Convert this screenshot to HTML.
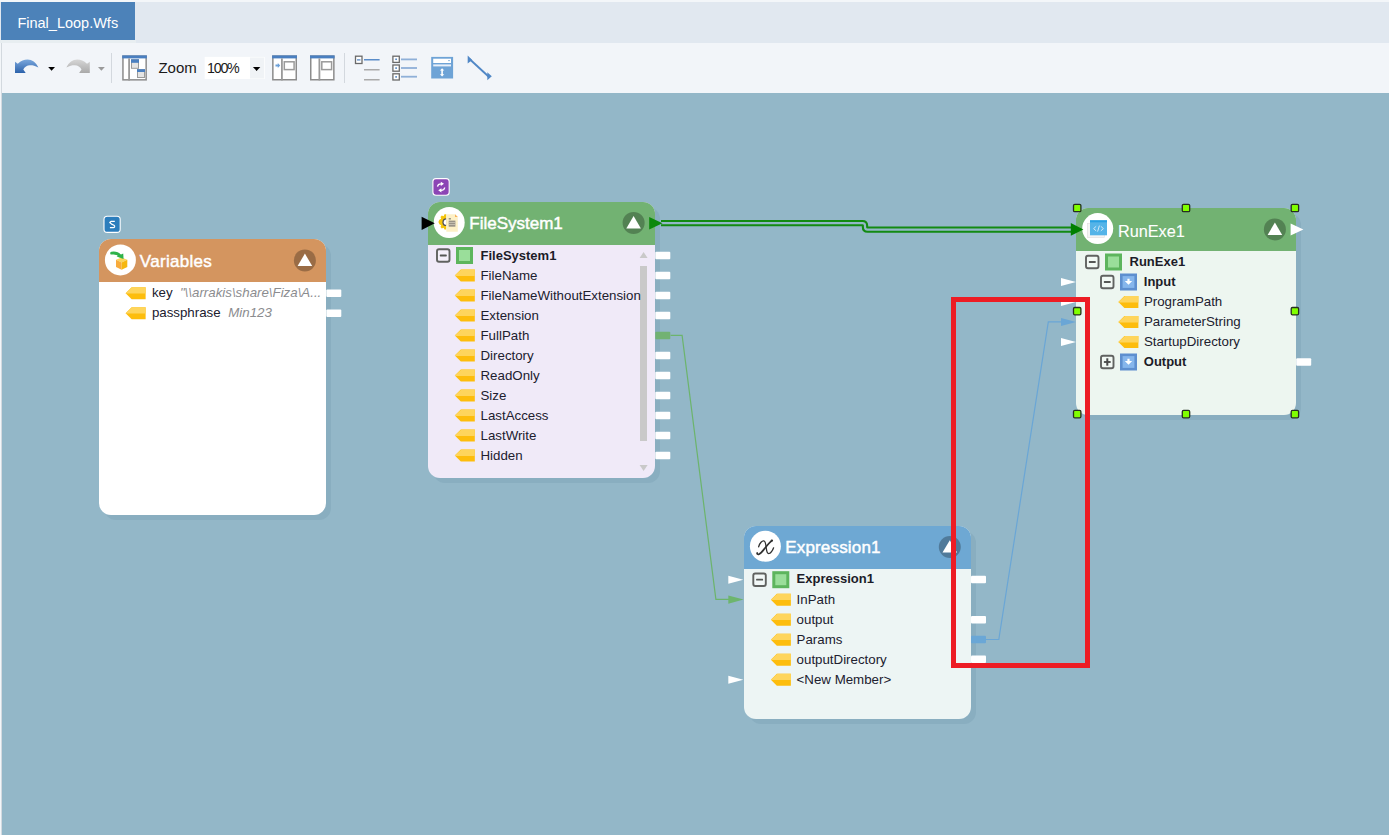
<!DOCTYPE html>
<html><head><meta charset="utf-8">
<style>
*{box-sizing:border-box;margin:0;padding:0}
html,body{width:1389px;height:835px;overflow:hidden;background:#f3f6f9;font-family:"Liberation Sans",sans-serif}
.abs{position:absolute}
#tabstrip{left:0;top:2px;width:1389px;height:41px;background:#e1e8f0}
#tab{left:1px;top:2px;width:134px;height:38px;background:#4c82b9}
#tabline{left:0;top:40px;width:136px;height:3px;background:#e8eef1}
#toolbar{left:1px;top:43px;width:1388px;height:50px;background:#f2f5f9;}
#canvas{left:2px;top:93px;width:1387px;height:742px;background:#93b7c8}
.t{position:absolute;white-space:nowrap;line-height:0}
.hdr{font-weight:normal;font-size:17px;color:#fff;-webkit-text-stroke:0.45px #fff}
.root{font-weight:bold;font-size:13px;color:#1c1c28}
.it{font-size:13.3px;color:#20202e}
.tab{font-size:14.5px;color:#fff}
.tb{font-size:15px;color:#1a1a1a}
.tb2{font-size:15px;color:#1a1a1a;letter-spacing:-1.3px;transform:scaleX(0.95);transform-origin:0 0}
.val{font-style:italic;color:#8b8c8f}
</style></head>
<body>
<div id="tabstrip" class="abs"></div>
<div id="tab" class="abs"></div>
<div id="tabline" class="abs"></div>
<div id="toolbar" class="abs"></div>
<div id="canvas" class="abs"></div>
<div class="abs" style="left:1px;top:43px;width:1px;height:792px;background:#d3d9df"></div>
<svg class="abs" style="left:0;top:0" width="1389" height="93" viewBox="0 0 1389 93"><defs><linearGradient id="ug" x1="0" y1="0" x2="0" y2="1"><stop offset="0" stop-color="#7aa7dc"/><stop offset="1" stop-color="#2c62ab"/></linearGradient><linearGradient id="rg" x1="0" y1="0" x2="0" y2="1"><stop offset="0" stop-color="#d6d6d6"/><stop offset="1" stop-color="#a9a9a9"/></linearGradient></defs><path d="M15,73 V61.7 L17.8,63.8 C21,61 24,59.6 27.6,59.6 C32,59.6 36,62.5 38.4,67.5 C35,65.8 32.5,65.2 30,65.3 C27,65.4 24.5,67 23.3,69.5 L25.7,73 Z" fill="url(#ug)"/><path d="M48.2,66.9 H55 L51.6,70.7 Z" fill="#000"/><g transform="translate(104.8,0) scale(-1,1)"><path d="M15,73 V61.7 L17.8,63.8 C21,61 24,59.6 27.6,59.6 C32,59.6 36,62.5 38.4,67.5 C35,65.8 32.5,65.2 30,65.3 C27,65.4 24.5,67 23.3,69.5 L25.7,73 Z" fill="url(#rg)"/></g><path d="M98,66.9 H104.8 L101.4,70.7 Z" fill="#9a9a9a"/><rect x="111" y="53" width="1" height="30" fill="#d3d8de"/><rect x="344" y="53" width="1" height="30" fill="#d3d8de"/><rect x="122.95" y="56.15" width="23.200000000000003" height="23.699999999999996" fill="#fff" stroke="#8c8c8c" stroke-width="1.5"/><rect x="122.2" y="55.4" width="24.700000000000003" height="3" fill="#4a7fc0"/><rect x="128.2" y="58.4" width="1.8" height="22.199999999999996" fill="#9a9a9a"/><rect x="131.5" y="59.8" width="7" height="8.5" fill="#e4e4e4" stroke="#9a9a9a" stroke-width="1"/><rect x="131" y="59.3" width="8" height="3.5" fill="#4a7fc0"/><rect x="137.5" y="69.7" width="7" height="7.8" fill="#e4e4e4" stroke="#9a9a9a" stroke-width="1"/><rect x="137" y="69.2" width="8" height="2.8" fill="#4a7fc0"/><rect x="204.7" y="56.9" width="60" height="22.1" fill="#fff"/><rect x="250" y="57.5" width="14" height="21" fill="#f0f3f6"/><path d="M252.9,66.9 H260.3 L256.6,70.9 Z" fill="#000"/><rect x="272.85" y="56.15" width="23.399999999999977" height="23.6" fill="#fff" stroke="#8c8c8c" stroke-width="1.5"/><rect x="272.1" y="55.4" width="24.899999999999977" height="3" fill="#4a7fc0"/><rect x="281" y="58.4" width="1.8" height="22.1" fill="#9a9a9a"/><rect x="284.3" y="61.8" width="9.8" height="7.8" fill="#fff" stroke="#9a9a9a" stroke-width="1.5"/><path d="M275.5,64.6 h2.3 v-1.5 l2.4,2.4 l-2.4,2.4 v-1.5 h-2.3 Z" fill="#6a9fd8"/><rect x="310.75" y="56.15" width="23.100000000000023" height="23.6" fill="#fff" stroke="#8c8c8c" stroke-width="1.5"/><rect x="310" y="55.4" width="24.600000000000023" height="3" fill="#4a7fc0"/><rect x="318.5" y="58.4" width="1.8" height="22.1" fill="#9a9a9a"/><rect x="321.8" y="61.8" width="9.8" height="7.8" fill="#fff" stroke="#9a9a9a" stroke-width="1.5"/><rect x="355.5" y="56.2" width="6.5" height="7.3" fill="#fff" stroke="#6a6a6a" stroke-width="1.3"/><rect x="357" y="59.3" width="3.5" height="1.2" fill="#4a7fc0"/><rect x="364" y="59" width="15.6" height="1.5" fill="#5a8cc8"/><rect x="364" y="69" width="15.6" height="1.5" fill="#aaaaaa"/><rect x="364" y="79" width="15.6" height="1.5" fill="#aaaaaa"/><rect x="392.9" y="56.2" width="6.4" height="6.2" fill="#fff" stroke="#6a6a6a" stroke-width="1.3"/><rect x="395.3" y="58.5" width="1.6" height="1.6" fill="#4a7fc0"/><rect x="392.9" y="65.0" width="6.4" height="6.2" fill="#fff" stroke="#6a6a6a" stroke-width="1.3"/><rect x="395.3" y="67.30000000000001" width="1.6" height="1.6" fill="#4a7fc0"/><rect x="392.9" y="73.8" width="6.4" height="6.2" fill="#fff" stroke="#6a6a6a" stroke-width="1.3"/><rect x="395.3" y="76.10000000000001" width="1.6" height="1.6" fill="#4a7fc0"/><rect x="401" y="58.5" width="16" height="1.8" fill="#8fb0d8"/><rect x="401" y="67.1" width="16" height="1.8" fill="#8fb0d8"/><rect x="401" y="75.8" width="16" height="1.8" fill="#8fb0d8"/><rect x="431.2" y="56.9" width="21.9" height="21.6" fill="#6ea3d6"/><rect x="433.2" y="58.7" width="17.8" height="4.3" fill="#fff"/><rect x="433.2" y="64.4" width="17.8" height="2" fill="#e8f0fa"/><path d="M448,60 h2 l-1,1.4 Z" fill="#6ea3d6"/><path d="M442.1,68.2 l-2.2,2.4 h1.4 v3.6 h-1.4 l2.2,2.4 l2.2,-2.4 h-1.4 v-3.6 h1.4 Z" fill="#fff"/><path d="M469.5,59 L488.5,76.5" stroke="#5087c6" stroke-width="1.9"/><path d="M467.7,55.6 L472.2,59.9 L467.7,63.6 Z" fill="#5087c6"/><path d="M487.3,72.2 L491.8,76.2 L487.3,80.3 Z" fill="#5087c6"/></svg>
<svg class="abs" style="left:0;top:0" width="1389" height="835" viewBox="0 0 1389 835"><rect x="104" y="244" width="227" height="276" rx="12" fill="#89aec0"/><clipPath id="c99"><rect x="99" y="239" width="227" height="276" rx="12"/></clipPath><g clip-path="url(#c99)"><rect x="99" y="239" width="227" height="276" fill="#ffffff"/><rect x="99" y="239" width="227" height="43" fill="#d4955f"/></g><circle cx="120.4" cy="259.9" r="15.5" fill="#fff"/><circle cx="304.9" cy="260.4" r="11" fill="#000" fill-opacity="0.27"/><path d="M297.59999999999997,265.9 L304.9,253.59999999999997 L312.2,265.9 Z" fill="#fff"/><g transform="translate(125.6,287.2)"><path d="M0,6 L6,0 H20 V12 H6 Z" fill="#fdbd0c"/><path d="M0,6 L6.6,0 H20 V6.4 H0.4 Z" fill="#fed55c"/></g><rect x="326.3" y="289.45" width="15" height="7.5" rx="1" fill="#fff"/><g transform="translate(125.6,307.2)"><path d="M0,6 L6,0 H20 V12 H6 Z" fill="#fdbd0c"/><path d="M0,6 L6.6,0 H20 V6.4 H0.4 Z" fill="#fed55c"/></g><rect x="326.3" y="309.45" width="15" height="7.5" rx="1" fill="#fff"/><rect x="104" y="216.2" width="16.2" height="16.2" rx="3.2" fill="#2b7dbc" stroke="#fff" stroke-width="1.1"/><path d="M114.8,221.4 H111 L109.8,222.5 L111.6,224.1 L114,225.2 Q114.8,225.8 114.6,226.7 Q114.3,227.6 113.2,227.7 H109.9" fill="none" stroke="#fff" stroke-width="1.25" stroke-linejoin="round"/><path d="M116,259.8 L121.6,257.4 L127.3,259.8 L121.6,262.4 Z" fill="#fad55c"/><path d="M116,259.8 L121.6,262.4 L121.6,269.7 L116,267 Z" fill="#f8ab3c"/><path d="M121.6,262.4 L127.3,259.8 L127.3,267 L121.6,269.7 Z" fill="#f6b70e"/><path d="M111.6,253.2 C115,252.6 118,253.6 120,255.8" fill="none" stroke="#2fb24a" stroke-width="2.8" stroke-linecap="round"/><path d="M116.6,256.6 L123.6,259 L123.2,253.4 Z" fill="#2fb24a"/><rect x="433" y="207" width="227" height="276" rx="12" fill="#89aec0"/><clipPath id="c428"><rect x="428" y="202" width="227" height="276" rx="12"/></clipPath><g clip-path="url(#c428)"><rect x="428" y="202" width="227" height="276" fill="#f0eaf8"/><rect x="428" y="202" width="227" height="43" fill="#72b272"/></g><circle cx="449.2" cy="222.5" r="15.5" fill="#fff"/><rect x="432.9" y="178.6" width="16.3" height="16.6" rx="3" fill="#8c45b5" stroke="#fff" stroke-width="1.1"/><path d="M437.5,186.6 C437.7,184.7 439,183.8 441.2,183.8 M444.7,187.5 C444.5,189.4 443.2,190.3 441,190.3" fill="none" stroke="#fff" stroke-width="1.3"/><path d="M440.8,181.7 L444,183.8 L440.8,185.9 Z M441.4,188.2 L438.2,190.3 L441.4,192.4 Z" fill="#fff"/><path d="M446.3,214.3 L446.3,229.6 L444.5,229.6 L443.6,227.8 L441.8,228.4 L440.5,227 L441.2,225.2 L439.4,224.2 L438.4,222 L439.4,219.8 L441.2,218.8 L440.5,217 L441.8,215.6 L443.6,216.2 L444.5,214.3 Z" fill="#f4c40c"/><path d="M446.3,218.3 A3.9,3.9 0 0 0 446.3,226.1 Z" fill="#50505a"/><path d="M446.3,219.6 A2.6,2.6 0 0 0 446.3,224.8 Z" fill="#fff"/><path d="M446.3,214.3 H455 L457.8,217 V231.7 H446.3 Z" fill="#fdf0c6"/><path d="M455,214.3 L457.8,217 H455 Z" fill="#f7b25a"/><rect x="448.7" y="218.1" width="2.2" height="1.4" fill="#8a8a80"/><rect x="448.7" y="220.6" width="6.7" height="6.1" fill="#9a9488"/><rect x="448.7" y="222.3" width="6.7" height="0.7" fill="#d8d0c0"/><rect x="448.7" y="224.3" width="6.7" height="0.7" fill="#d8d0c0"/><circle cx="633.6" cy="222.9" r="11" fill="#000" fill-opacity="0.27"/><path d="M626.3000000000001,228.4 L633.6,216.1 L640.9,228.4 Z" fill="#fff"/><rect x="437" y="249.25" width="12.5" height="12.5" rx="2" fill="#fff" fill-opacity="0.3" stroke="#606260" stroke-width="1.9"/><rect x="439.8" y="254.6" width="7" height="1.8" rx="0.6" fill="#555755"/><rect x="457.5" y="248.5" width="14" height="14" fill="#9ade9a" stroke="#5db55d" stroke-width="3"/><rect x="655.3" y="251.75" width="15" height="7.5" rx="1" fill="#fff"/><g transform="translate(454.8,269.5)"><path d="M0,6 L6,0 H20 V12 H6 Z" fill="#fdbd0c"/><path d="M0,6 L6.6,0 H20 V6.4 H0.4 Z" fill="#fed55c"/></g><rect x="655.3" y="271.75" width="15" height="7.5" rx="1" fill="#fff"/><g transform="translate(454.8,289.5)"><path d="M0,6 L6,0 H20 V12 H6 Z" fill="#fdbd0c"/><path d="M0,6 L6.6,0 H20 V6.4 H0.4 Z" fill="#fed55c"/></g><rect x="655.3" y="291.75" width="15" height="7.5" rx="1" fill="#fff"/><g transform="translate(454.8,309.5)"><path d="M0,6 L6,0 H20 V12 H6 Z" fill="#fdbd0c"/><path d="M0,6 L6.6,0 H20 V6.4 H0.4 Z" fill="#fed55c"/></g><rect x="655.3" y="311.75" width="15" height="7.5" rx="1" fill="#fff"/><g transform="translate(454.8,329.5)"><path d="M0,6 L6,0 H20 V12 H6 Z" fill="#fdbd0c"/><path d="M0,6 L6.6,0 H20 V6.4 H0.4 Z" fill="#fed55c"/></g><rect x="655.3" y="331.75" width="15" height="7.5" rx="1" fill="#72b272"/><g transform="translate(454.8,349.5)"><path d="M0,6 L6,0 H20 V12 H6 Z" fill="#fdbd0c"/><path d="M0,6 L6.6,0 H20 V6.4 H0.4 Z" fill="#fed55c"/></g><rect x="655.3" y="351.75" width="15" height="7.5" rx="1" fill="#fff"/><g transform="translate(454.8,369.5)"><path d="M0,6 L6,0 H20 V12 H6 Z" fill="#fdbd0c"/><path d="M0,6 L6.6,0 H20 V6.4 H0.4 Z" fill="#fed55c"/></g><rect x="655.3" y="371.75" width="15" height="7.5" rx="1" fill="#fff"/><g transform="translate(454.8,389.5)"><path d="M0,6 L6,0 H20 V12 H6 Z" fill="#fdbd0c"/><path d="M0,6 L6.6,0 H20 V6.4 H0.4 Z" fill="#fed55c"/></g><rect x="655.3" y="391.75" width="15" height="7.5" rx="1" fill="#fff"/><g transform="translate(454.8,409.5)"><path d="M0,6 L6,0 H20 V12 H6 Z" fill="#fdbd0c"/><path d="M0,6 L6.6,0 H20 V6.4 H0.4 Z" fill="#fed55c"/></g><rect x="655.3" y="411.75" width="15" height="7.5" rx="1" fill="#fff"/><g transform="translate(454.8,429.5)"><path d="M0,6 L6,0 H20 V12 H6 Z" fill="#fdbd0c"/><path d="M0,6 L6.6,0 H20 V6.4 H0.4 Z" fill="#fed55c"/></g><rect x="655.3" y="431.75" width="15" height="7.5" rx="1" fill="#fff"/><g transform="translate(454.8,449.5)"><path d="M0,6 L6,0 H20 V12 H6 Z" fill="#fdbd0c"/><path d="M0,6 L6.6,0 H20 V6.4 H0.4 Z" fill="#fed55c"/></g><rect x="655.3" y="451.75" width="15" height="7.5" rx="1" fill="#fff"/><path d="M639.6,258 L643.6,252 L647.6,258 Z" fill="#c9c9c9"/><rect x="640" y="266" width="7" height="175" fill="#c9c9c9"/><path d="M639.6,465 L643.6,471 L647.6,465 Z" fill="#c9c9c9"/><rect x="1081" y="213" width="220" height="207" rx="12" fill="#89aec0"/><clipPath id="c1076"><rect x="1076" y="208" width="220" height="207" rx="12"/></clipPath><g clip-path="url(#c1076)"><rect x="1076" y="208" width="220" height="207" fill="#edf6f0"/><rect x="1076" y="208" width="220" height="43" fill="#72b272"/></g><circle cx="1097.7" cy="228.6" r="15.5" fill="#fff"/><rect x="1087.3" y="223.4" width="17" height="14.2" fill="#f4f4f4" stroke="#e0dcdc" stroke-width="0.6"/><rect x="1090" y="220.3" width="17" height="15" fill="#55b4e8"/><rect x="1090" y="220.3" width="17" height="2" fill="#28a0e2"/><path d="M1096.2,226.3 L1093.6,228.6 L1096.2,230.9 M1100.8,226.3 L1103.4,228.6 L1100.8,230.9 M1099.4,225.6 L1097.6,231.6" fill="none" stroke="#cfe9f8" stroke-width="1"/><circle cx="1274.9" cy="229.4" r="11" fill="#000" fill-opacity="0.27"/><path d="M1267.6000000000001,234.9 L1274.9,222.6 L1282.2,234.9 Z" fill="#fff"/><rect x="1086" y="255.75" width="12.5" height="12.5" rx="2" fill="#fff" fill-opacity="0.3" stroke="#606260" stroke-width="1.9"/><rect x="1088.8" y="261.1" width="7" height="1.8" rx="0.6" fill="#555755"/><rect x="1106.5" y="255" width="14" height="14" fill="#9ade9a" stroke="#5db55d" stroke-width="3"/><rect x="1101" y="275.75" width="12.5" height="12.5" rx="2" fill="#fff" fill-opacity="0.3" stroke="#606260" stroke-width="1.9"/><rect x="1103.8" y="281.1" width="7" height="1.8" rx="0.6" fill="#555755"/><rect x="1121.3" y="274.8" width="14.4" height="14.4" fill="#86b6ec" stroke="#5e8fcf" stroke-width="2.6"/><path d="M1127.4,278.7 h2.2 v2.2 h2.6 l-3.7,3.8 l-3.7,-3.8 h2.6 Z" fill="#fff"/><g transform="translate(1118.4,296)"><path d="M0,6 L6,0 H20 V12 H6 Z" fill="#fdbd0c"/><path d="M0,6 L6.6,0 H20 V6.4 H0.4 Z" fill="#fed55c"/></g><g transform="translate(1118.4,316)"><path d="M0,6 L6,0 H20 V12 H6 Z" fill="#fdbd0c"/><path d="M0,6 L6.6,0 H20 V6.4 H0.4 Z" fill="#fed55c"/></g><g transform="translate(1118.4,336)"><path d="M0,6 L6,0 H20 V12 H6 Z" fill="#fdbd0c"/><path d="M0,6 L6.6,0 H20 V6.4 H0.4 Z" fill="#fed55c"/></g><rect x="1101" y="355.75" width="12.5" height="12.5" rx="2" fill="#fff" fill-opacity="0.3" stroke="#606260" stroke-width="1.9"/><rect x="1103.8" y="361.1" width="7" height="1.8" rx="0.6" fill="#555755"/><rect x="1106.3" y="358.3" width="2" height="7.4" fill="#4a4a4a"/><rect x="1121.3" y="354.8" width="14.4" height="14.4" fill="#86b6ec" stroke="#5e8fcf" stroke-width="2.6"/><path d="M1127.4,358.7 h2.2 v2.2 h2.6 l-3.7,3.8 l-3.7,-3.8 h2.6 Z" fill="#fff"/><rect x="1296.2" y="358.25" width="15" height="7.5" rx="1" fill="#fff"/><path d="M1061,278 L1076,282 L1061,286 Z" fill="#fff"/><path d="M1061,298 L1076,302 L1061,306 Z" fill="#fff"/><path d="M1061,318 L1076,322 L1061,326 Z" fill="#6aa6d6"/><path d="M1061,338 L1076,342 L1061,346 Z" fill="#fff"/><path d="M1290.6,223.4 L1303.4,229.4 L1290.6,235.4 Z" fill="#fff"/><rect x="749" y="531" width="227" height="193" rx="12" fill="#89aec0"/><clipPath id="c744"><rect x="744" y="526" width="227" height="193" rx="12"/></clipPath><g clip-path="url(#c744)"><rect x="744" y="526" width="227" height="193" fill="#edf5f4"/><rect x="744" y="526" width="227" height="43" fill="#6ea8d3"/></g><circle cx="765.4" cy="546.2" r="15.5" fill="#fff"/><path d="M772.2,540.6 C770.5,541.5 768,544.5 765.5,547.5 C763,550.5 761,553.5 759,554.2 C757.8,554.6 756.8,554 757.2,553" fill="none" stroke="#303030" stroke-width="1.7" stroke-linecap="round"/><circle cx="771.8" cy="540.6" r="1.1" fill="#303030"/><path d="M758.6,546.8 C759.5,543 762.3,540.2 764.2,541 C765.8,541.8 765.8,545 766.3,548.5 C766.8,552 767.5,554 769.2,553.5 C770.8,553 772.6,550.5 773.6,547.8" fill="none" stroke="#303030" stroke-width="1.3" stroke-linecap="round"/><circle cx="949.8" cy="547" r="11" fill="#000" fill-opacity="0.27"/><path d="M942.5,552.5 L949.8,540.2 L957.0999999999999,552.5 Z" fill="#fff"/><rect x="753.3" y="573.45" width="12.5" height="12.5" rx="2" fill="#fff" fill-opacity="0.3" stroke="#606260" stroke-width="1.9"/><rect x="756.0999999999999" y="578.8000000000001" width="7" height="1.8" rx="0.6" fill="#555755"/><rect x="773.8" y="572.7" width="14" height="14" fill="#9ade9a" stroke="#5db55d" stroke-width="3"/><rect x="971" y="575.75" width="15" height="7.5" rx="1" fill="#fff"/><g transform="translate(770.9,593.7)"><path d="M0,6 L6,0 H20 V12 H6 Z" fill="#fdbd0c"/><path d="M0,6 L6.6,0 H20 V6.4 H0.4 Z" fill="#fed55c"/></g><g transform="translate(770.9,613.7)"><path d="M0,6 L6,0 H20 V12 H6 Z" fill="#fdbd0c"/><path d="M0,6 L6.6,0 H20 V6.4 H0.4 Z" fill="#fed55c"/></g><g transform="translate(770.9,633.7)"><path d="M0,6 L6,0 H20 V12 H6 Z" fill="#fdbd0c"/><path d="M0,6 L6.6,0 H20 V6.4 H0.4 Z" fill="#fed55c"/></g><g transform="translate(770.9,653.7)"><path d="M0,6 L6,0 H20 V12 H6 Z" fill="#fdbd0c"/><path d="M0,6 L6.6,0 H20 V6.4 H0.4 Z" fill="#fed55c"/></g><g transform="translate(770.9,673.7)"><path d="M0,6 L6,0 H20 V12 H6 Z" fill="#fdbd0c"/><path d="M0,6 L6.6,0 H20 V6.4 H0.4 Z" fill="#fed55c"/></g><rect x="971" y="615.95" width="15" height="7.5" rx="1" fill="#fff"/><rect x="971" y="635.75" width="15" height="7.5" rx="1" fill="#6aa7d6"/><rect x="971" y="655.45" width="15" height="7.5" rx="1" fill="#fff"/><path d="M728.3,575.7 L743.3,579.7 L728.3,583.7 Z" fill="#fff"/><path d="M728.3,675.7 L743.3,679.7 L728.3,683.7 Z" fill="#fff"/><path d="M670.6,335.3 H682.1 L715.9,599.4 H730" fill="none" stroke="#6cb46c" stroke-width="1.2"/><path d="M728.3,595.4 L743.6,599.6 L728.3,603.8 Z" fill="#6db56d"/><path d="M986,639.5 H998.8 L1048.3,321.9 H1062" fill="none" stroke="#6aa6d6" stroke-width="1.2"/><path d="M421.6,216.7 L434.8,223.3 L421.6,229.9 Z" fill="#000"/><path d="M661,223.1 H862.5 Q865,223.1 865,225.6 V227 Q865,229.6 867.5,229.6 H1071" fill="none" stroke="#128a12" stroke-width="6.4"/><path d="M661,223.1 H862.5 Q865,223.1 865,225.6 V227 Q865,229.6 867.5,229.6 H1071" fill="none" stroke="#93b7c8" stroke-width="2.2"/><path d="M649.2,216.9 L662.5,223.2 L649.2,229.5 Z" fill="#0c880c"/><path d="M1070.8,223 L1083.4,229.4 L1070.8,235.7 Z" fill="#008000"/></svg>
<div class="t hdr" style="left:139.8px;top:261.51px;letter-spacing:0.3px">Variables</div>
<div class="t tab" style="left:17.4px;top:23.08px">Final_Loop.Wfs</div>
<div class="t tb" style="left:158.4px;top:67.80px">Zoom</div>
<div class="t tb2" style="left:206.6px;top:67.89px">100%</div>
<div class="t it" style="left:151.9px;top:293.29px">key<span class="val" style="position:absolute;left:28px">"\\arrakis\share\Fiza\A...</span></div>
<div class="t it" style="left:151.9px;top:313.29px">passphrase<span class="val" style="position:absolute;left:76.4px">Min123</span></div>
<div class="t it" style="left:480.5px;top:275.79px">FileName</div>
<div class="t it" style="left:480.5px;top:295.79px">FileNameWithoutExtension</div>
<div class="t it" style="left:480.5px;top:315.79px">Extension</div>
<div class="t it" style="left:480.5px;top:335.79px">FullPath</div>
<div class="t it" style="left:480.5px;top:355.79px">Directory</div>
<div class="t it" style="left:480.5px;top:375.79px">ReadOnly</div>
<div class="t it" style="left:480.5px;top:395.79px">Size</div>
<div class="t it" style="left:480.5px;top:415.79px">LastAccess</div>
<div class="t it" style="left:480.5px;top:435.79px">LastWrite</div>
<div class="t it" style="left:480.5px;top:455.79px">Hidden</div>
<div class="t hdr" style="left:469.3px;top:224.01px">FileSystem1</div>
<div class="t root" style="left:480.5px;top:256.00px">FileSystem1</div>
<div class="t it" style="left:1143.9px;top:301.99px">ProgramPath</div>
<div class="t it" style="left:1143.9px;top:321.99px">ParameterString</div>
<div class="t it" style="left:1143.9px;top:341.99px">StartupDirectory</div>
<div class="t hdr" style="left:1117.9px;top:230.65px;font-size:16.3px;-webkit-text-stroke:0.1px #fff">RunExe1</div>
<div class="t root" style="left:1129.5px;top:261.80px">RunExe1</div>
<div class="t root" style="left:1143.8px;top:281.80px">Input</div>
<div class="t root" style="left:1143.8px;top:361.80px">Output</div>
<div class="t it" style="left:796.6px;top:599.79px">InPath</div>
<div class="t it" style="left:796.6px;top:619.79px">output</div>
<div class="t it" style="left:796.6px;top:639.79px">Params</div>
<div class="t it" style="left:796.6px;top:659.79px">outputDirectory</div>
<div class="t it" style="left:796.6px;top:679.79px">&lt;New Member&gt;</div>
<div class="t hdr" style="left:785.2px;top:548.11px;letter-spacing:0.18px">Expression1</div>
<div class="t root" style="left:796.6px;top:579.20px">Expression1</div>
<svg class="abs" style="left:0;top:0" width="1389" height="835" viewBox="0 0 1389 835"><rect x="953.5" y="299.5" width="134" height="366" fill="none" stroke="#ed1c24" stroke-width="5"/><rect x="1073.5" y="204.3" width="7.4" height="7.4" rx="1.3" fill="#80ff00" stroke="#26301f" stroke-width="1.3"/><rect x="1073.5" y="307.5" width="7.4" height="7.4" rx="1.3" fill="#80ff00" stroke="#26301f" stroke-width="1.3"/><rect x="1073.5" y="410.40000000000003" width="7.4" height="7.4" rx="1.3" fill="#80ff00" stroke="#26301f" stroke-width="1.3"/><rect x="1182.3" y="204.3" width="7.4" height="7.4" rx="1.3" fill="#80ff00" stroke="#26301f" stroke-width="1.3"/><rect x="1182.3" y="410.40000000000003" width="7.4" height="7.4" rx="1.3" fill="#80ff00" stroke="#26301f" stroke-width="1.3"/><rect x="1291.2" y="204.3" width="7.4" height="7.4" rx="1.3" fill="#80ff00" stroke="#26301f" stroke-width="1.3"/><rect x="1291.2" y="307.5" width="7.4" height="7.4" rx="1.3" fill="#80ff00" stroke="#26301f" stroke-width="1.3"/><rect x="1291.2" y="410.40000000000003" width="7.4" height="7.4" rx="1.3" fill="#80ff00" stroke="#26301f" stroke-width="1.3"/></svg>
</body></html>
